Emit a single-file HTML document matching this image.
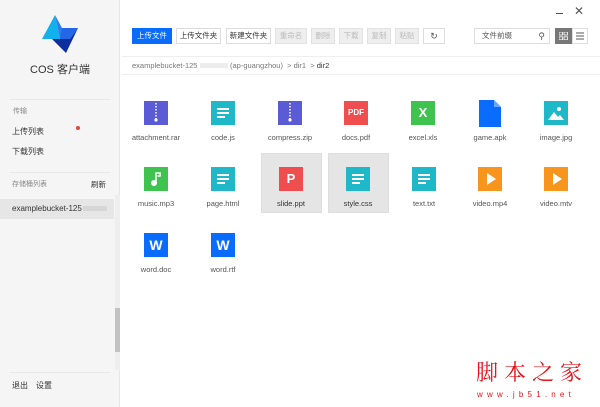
<!DOCTYPE html>
<html><head><meta charset="utf-8"><style>
*{margin:0;padding:0;box-sizing:border-box}
body{width:600px;height:407px;position:relative;overflow:hidden;background:#fff;font-family:"Liberation Sans","Noto Sans CJK SC",sans-serif;color:#333}
.a{position:absolute}
.side{left:0;top:0;width:120px;height:407px;background:#f5f5f5;border-right:1px solid #e6e6e6}
.t{font-size:8px;white-space:nowrap}
.btn{position:absolute;top:28px;height:16px;border:1px solid #ddd;background:#fff;font-size:7.5px;line-height:14px;text-align:center;color:#333}
.dis{background:#eee;color:#bbb;border-color:#e2e2e2}
.ic{position:absolute;width:24px;height:24px;color:#fff;font-weight:bold;text-align:center}
.lb{position:absolute;width:66px;text-align:center;font-size:7.5px;color:#555}
.sel{position:absolute;background:#e5e5e5;border:1px solid #ddd}
.lines{display:flex;flex-direction:column;justify-content:center;align-items:flex-start;padding-left:6px;gap:2px;height:24px}
.lines i{display:block;height:2px;background:#fff}
</style></head><body>
<div class="a side"></div>
<svg class="a" style="left:0;top:0" width="120" height="60" viewBox="0 0 120 60">
<polygon points="55,15 42,39 60,39" fill="#12b0ec"/>
<polygon points="55,15 62,28 78,28 70,39 60,39" fill="#2f7bf0"/>
<polygon points="52,39 70,39 78,28 66,53" fill="#0d2f9e"/>
<polygon points="60,39 70,39 78,28 62,28" fill="#2466e6"/>
</svg>
<div class="a" style="left:0;top:61px;width:120px;text-align:center;font-size:11px;color:#333">COS 客户端</div>
<div class="a" style="left:10px;top:99px;width:100px;height:1px;background:#e8e8e8"></div>
<div class="a t" style="left:13px;top:106px;color:#888;font-size:7px">传输</div>
<div class="a t" style="left:12px;top:126px">上传列表</div>
<div class="a" style="left:76px;top:126px;width:4px;height:4px;border-radius:50%;background:#e54545"></div>
<div class="a t" style="left:12px;top:146px">下载列表</div>
<div class="a" style="left:10px;top:172px;width:100px;height:1px;background:#e8e8e8"></div>
<div class="a t" style="left:12px;top:179px;color:#888;font-size:7px">存储桶列表</div>
<div class="a t" style="left:91px;top:179px;font-size:7.5px">刷新</div>
<div class="a" style="left:0;top:199px;width:114px;height:20px;background:#e6e6e6"></div>
<div class="a t" style="left:12px;top:204px">examplebucket-125</div>
<div class="a" style="left:83px;top:206px;width:24px;height:5px;background:#d6d6d6"></div>
<div class="a" style="left:115px;top:195px;width:5px;height:175px;background:#eee"></div>
<div class="a" style="left:115px;top:308px;width:5px;height:44px;background:#c2c2c2"></div>
<div class="a" style="left:10px;top:372px;width:100px;height:1px;background:#e8e8e8"></div>
<div class="a t" style="left:12px;top:380px">退出</div>
<div class="a t" style="left:36px;top:380px">设置</div>

<div class="a" style="left:556px;top:13px;width:7px;height:1px;background:#555"></div>
<div class="a" style="left:574px;top:4px;font-size:12px;color:#555">✕</div>

<div class="btn" style="left:132px;width:40px;background:#0a6cff;border-color:#0a6cff;color:#fff">上传文件</div>
<div class="btn" style="left:176px;width:45px">上传文件夹</div>
<div class="btn" style="left:226px;width:45px">新建文件夹</div>
<div class="btn dis" style="left:275px;width:32px">重命名</div>
<div class="btn dis" style="left:311px;width:24px">删除</div>
<div class="btn dis" style="left:339px;width:24px">下载</div>
<div class="btn dis" style="left:367px;width:24px">复制</div>
<div class="btn dis" style="left:395px;width:24px">粘贴</div>
<div class="btn" style="left:423px;width:22px;font-size:9px;color:#555">↻</div>
<div class="btn" style="left:474px;width:76px;text-align:left;padding-left:7px;color:#555">文件前缀<span style="position:absolute;right:4px;top:0;font-size:9px">⚲</span></div>
<div class="a" style="left:555px;top:28px;width:17px;height:16px;background:#777"></div>
<svg class="a" style="left:559px;top:32px" width="9" height="8"><rect x="0" y="0" width="3.5" height="3" fill="none" stroke="#fff" stroke-width=".8"/><rect x="5" y="0" width="3.5" height="3" fill="none" stroke="#fff" stroke-width=".8"/><rect x="0" y="4.8" width="3.5" height="3" fill="none" stroke="#fff" stroke-width=".8"/><rect x="5" y="4.8" width="3.5" height="3" fill="none" stroke="#fff" stroke-width=".8"/></svg>
<div class="a" style="left:572px;top:28px;width:16px;height:16px;border:1px solid #ddd"></div>
<svg class="a" style="left:576px;top:32px" width="8" height="8"><path d="M0 1H8M0 4H8M0 7H8" stroke="#555" stroke-width=".9"/></svg>

<div class="a" style="left:122px;top:56px;width:478px;height:1px;background:#eee"></div>
<div class="a t" style="left:132px;top:61px;color:#777;font-size:7.5px">examplebucket-125</div>
<div class="a" style="left:200px;top:63px;width:28px;height:5px;background:#eee"></div>
<div class="a t" style="left:230px;top:61px;color:#777;font-size:7.5px">(ap-guangzhou) &nbsp;&gt; dir1 &nbsp;&gt; <span style="color:#333">dir2</span></div>
<div class="a" style="left:122px;top:74px;width:478px;height:1px;background:#eee"></div>

<div class="sel" style="left:261px;top:153px;width:61px;height:60px"></div>
<div class="sel" style="left:328px;top:153px;width:61px;height:60px"></div>

<!-- row1 -->
<div class="ic" style="left:144px;top:101px;background:#5b5bd6"><svg width="24" height="24"><path d="M12 2v16" stroke="#fff" stroke-width="1.5" stroke-dasharray="1.5 1.5"/><circle cx="12" cy="19" r="1.6" fill="#fff"/></svg></div>
<div class="lb" style="left:123px;top:133px">attachment.rar</div>
<div class="ic lines" style="left:211px;top:101px;background:#1fb8c8"><i style="width:12px"></i><i style="width:12px"></i><i style="width:8px"></i></div>
<div class="lb" style="left:190px;top:133px">code.js</div>
<div class="ic" style="left:278px;top:101px;background:#5b5bd6"><svg width="24" height="24"><path d="M12 2v16" stroke="#fff" stroke-width="1.5" stroke-dasharray="1.5 1.5"/><circle cx="12" cy="19" r="1.6" fill="#fff"/></svg></div>
<div class="lb" style="left:257px;top:133px">compress.zip</div>
<div class="ic" style="left:344px;top:101px;background:#f04e4e;font-size:8px;line-height:24px">PDF</div>
<div class="lb" style="left:323px;top:133px">docs.pdf</div>
<div class="ic" style="left:411px;top:101px;background:#3fc34f;font-size:13px;line-height:24px">X</div>
<div class="lb" style="left:390px;top:133px">excel.xls</div>
<svg class="a" style="left:478px;top:100px" width="24" height="28"><path d="M1 0H16L23 7V27H1Z" fill="#0a6cff"/><path d="M16 0V7H23" fill="#6aa6ff"/></svg>
<div class="lb" style="left:457px;top:133px">game.apk</div>
<div class="ic" style="left:544px;top:101px;background:#1fb8c8"><svg width="24" height="24"><circle cx="15" cy="8" r="2" fill="#fff"/><path d="M4 19L10 11L14 16L16 14L20 19Z" fill="#fff"/></svg></div>
<div class="lb" style="left:523px;top:133px">image.jpg</div>
<!-- row2 -->
<div class="ic" style="left:144px;top:167px;background:#3fc34f"><svg width="24" height="24"><circle cx="10" cy="16" r="3" fill="#fff"/><path d="M12 16V6H16V9H13.5" stroke="#fff" stroke-width="1.6" fill="none"/></svg></div>
<div class="lb" style="left:123px;top:199px">music.mp3</div>
<div class="ic lines" style="left:211px;top:167px;background:#1fb8c8"><i style="width:12px"></i><i style="width:12px"></i><i style="width:8px"></i></div>
<div class="lb" style="left:190px;top:199px">page.html</div>
<div class="ic" style="left:279px;top:167px;background:#f04e4e;font-size:13px;line-height:24px">P</div>
<div class="lb" style="left:258px;top:199px;color:#333">slide.ppt</div>
<div class="ic lines" style="left:346px;top:167px;background:#1fb8c8"><i style="width:12px"></i><i style="width:12px"></i><i style="width:8px"></i></div>
<div class="lb" style="left:325px;top:199px;color:#333">style.css</div>
<div class="ic lines" style="left:412px;top:167px;background:#1fb8c8"><i style="width:12px"></i><i style="width:12px"></i><i style="width:8px"></i></div>
<div class="lb" style="left:391px;top:199px">text.txt</div>
<div class="ic" style="left:478px;top:167px;background:#f7951c"><svg width="24" height="24"><path d="M9 6L18 12L9 18Z" fill="#fff"/></svg></div>
<div class="lb" style="left:457px;top:199px">video.mp4</div>
<div class="ic" style="left:544px;top:167px;background:#f7951c"><svg width="24" height="24"><path d="M9 6L18 12L9 18Z" fill="#fff"/></svg></div>
<div class="lb" style="left:523px;top:199px">video.mtv</div>
<!-- row3 -->
<div class="ic" style="left:144px;top:233px;background:#0a6cff;font-size:14px;line-height:24px">W</div>
<div class="lb" style="left:123px;top:265px">word.doc</div>
<div class="ic" style="left:211px;top:233px;background:#0a6cff;font-size:14px;line-height:24px">W</div>
<div class="lb" style="left:190px;top:265px">word.rtf</div>

<div class="a" style="left:476px;top:358px;font-family:'Noto Serif CJK SC',serif;font-size:22px;line-height:28px;color:#e8131b;letter-spacing:6px;white-space:nowrap">脚本之家</div>
<div class="a" style="left:477px;top:390px;font-size:8px;color:#e8131b;letter-spacing:4.2px;white-space:nowrap">www.jb51.net</div>
</body></html>
